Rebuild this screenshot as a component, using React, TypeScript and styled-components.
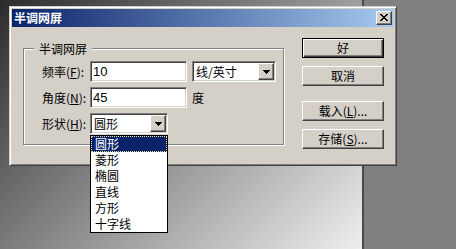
import React from "react";
import styled, { createGlobalStyle } from "styled-components";

const GlobalStyle = createGlobalStyle`
  html, body {
    margin: 0;
    padding: 0;
  }
  body {
    width: 456px;
    height: 249px;
    overflow: hidden;
    font-family: "Noto Sans CJK SC", "Liberation Sans", sans-serif;
    font-size: 12px;
    color: #000;
  }
`;

const face = "#d4d0c8";

const Screen = styled.div`
  position: relative;
  display: flex;
  width: 456px;
  height: 249px;
  overflow: hidden;
`;

const Canvas = styled.div`
  width: 362px;
  height: 100%;
  background: linear-gradient(135deg, #2b2b2b 0%, #efefef 100%);
`;

const CanvasEdge = styled.div`
  width: 2px;
  background: #4a4a4a;
`;

const Workspace = styled.div`
  flex: 1;
  background: #808080;
`;

const Window = styled.div`
  position: absolute;
  left: 9px;
  top: 6px;
  width: 388px;
  height: 160px;
  box-sizing: border-box;
  display: flex;
  flex-direction: column;
  padding: 2px;
  background: ${face};
  border: 1px solid;
  border-color: ${face} #404040 #404040 ${face};
  box-shadow: inset 1px 1px 0 #fff, inset -1px -1px 0 #808080;
`;

const TitleBar = styled.div`
  height: 18px;
  display: flex;
  align-items: center;
  justify-content: space-between;
  padding: 0 2px;
  background: linear-gradient(90deg, #0a246a 0%, #a6caf0 100%);
`;

const Title = styled.span`
  color: #fff;
  font-weight: bold;
  font-size: 12px;
  line-height: 14px;
`;

const raised = `
  border: 1px solid;
  border-color: #fff #404040 #404040 #fff;
  box-shadow: inset -1px -1px 0 #808080, inset 1px 1px 0 ${face};
  background: ${face};
`;

const CloseButton = styled.div`
  width: 16px;
  height: 14px;
  box-sizing: border-box;
  ${raised}
  display: flex;
  align-items: center;
  justify-content: center;
  padding: 0 1px 1px 0;
`;

const Body = styled.div`
  display: flex;
  padding: 11px 10px 0 11px;
`;

const LeftColumn = styled.div`
  width: 262px;
  padding-top: 10px;
`;

const GroupBox = styled.div`
  position: relative;
  width: 261px;
  height: 97px;
  box-sizing: border-box;
  border: 1px solid #808080;
  box-shadow: inset 1px 1px 0 #fff, 1px 1px 0 #fff;
  padding: 12px 0 0 18px;
  display: flex;
  flex-direction: column;
  gap: 5px;
`;

const Legend = styled.span`
  position: absolute;
  top: -7px;
  left: 10px;
  padding: 0 5px;
  background: ${face};
  line-height: 13px;
`;

const Row = styled.div`
  display: flex;
  align-items: center;
  height: 21px;
`;

const Label = styled.span`
  width: 48px;
  line-height: 14px;
  white-space: nowrap;
`;

const Unit = styled.span`
  margin-left: 5px;
  line-height: 14px;
`;

const sunken = `
  border: 1px solid;
  border-color: #808080 #fff #fff #808080;
  box-shadow: inset 1px 1px 0 #404040, inset -1px -1px 0 ${face};
  background: #fff;
`;

const TextField = styled.div<{ $w: number }>`
  width: ${(p) => p.$w}px;
  height: 21px;
  box-sizing: border-box;
  ${sunken}
  padding: 0 0 0 2px;
  display: flex;
  align-items: center;
  font-family: "Liberation Sans", sans-serif;
  font-size: 13px;
`;

const Combo = styled.div<{ $w: number; $gap?: number }>`
  position: relative;
  width: ${(p) => p.$w}px;
  height: 21px;
  margin-left: ${(p) => p.$gap ?? 0}px;
  box-sizing: border-box;
  ${sunken}
  padding: 1px 1px 1px 3px;
  display: flex;
  align-items: center;
  justify-content: space-between;
`;

const ComboText = styled.span`
  line-height: 14px;
`;

const ComboButton = styled.div`
  width: 16px;
  height: 17px;
  box-sizing: border-box;
  ${raised}
  display: flex;
  align-items: center;
  justify-content: center;
`;

const DropList = styled.ul`
  position: absolute;
  left: -1px;
  top: 21px;
  width: 78px;
  margin: 0;
  padding: 0;
  list-style: none;
  box-sizing: border-box;
  border: 1px solid #000;
  background: #fff;
  z-index: 2;
`;

const Option = styled.li<{ $active?: boolean }>`
  height: 16px;
  line-height: 16px;
  padding-left: 4px;
  box-sizing: border-box;
  background: ${(p) => (p.$active ? "#0a246a" : "#fff")};
  color: ${(p) => (p.$active ? "#fff" : "#000")};
  outline: ${(p) => (p.$active ? "1px dotted #e8d890" : "none")};
  outline-offset: -1px;
`;

const ButtonColumn = styled.div`
  margin-left: 17px;
  width: 82px;
  display: flex;
  flex-direction: column;
`;

const Button = styled.div<{ $default?: boolean; $gap?: number }>`
  height: 20px;
  box-sizing: border-box;
  margin-top: ${(p) => p.$gap ?? 0}px;
  display: flex;
  align-items: center;
  justify-content: center;
  line-height: 14px;
  background: ${face};
  ${(p) =>
    p.$default
      ? `
    border: 1px solid #000;
    box-shadow: inset 1px 1px 0 #fff, inset -1px -1px 0 #404040, inset -2px -2px 0 #808080;
  `
      : `
    border: 1px solid;
    border-color: #fff #404040 #404040 #fff;
    box-shadow: inset -1px -1px 0 #808080;
  `}
`;

const CloseGlyph = () => (
  <svg width="8" height="7" viewBox="0 0 8 7" shapeRendering="crispEdges">
    <path
      d="M0 0h2v1h-2zM6 0h2v1h-2zM1 1h2v1h-2zM5 1h2v1h-2zM2 2h4v1h-4zM3 3h2v1h-2zM2 4h4v1h-4zM1 5h2v1h-2zM5 5h2v1h-2zM0 6h2v1h-2zM6 6h2v1h-2z"
      fill="#000"
    />
  </svg>
);

const DownArrow = () => (
  <svg width="7" height="4" viewBox="0 0 7 4" shapeRendering="crispEdges">
    <path d="M0 0h7v1h-7zM1 1h5v1h-5zM2 2h3v1h-3zM3 3h1v1h-1z" fill="#000" />
  </svg>
);

const shapes = ["圆形", "菱形", "椭圆", "直线", "方形", "十字线"];

export default function App() {
  return (
    <>
      <GlobalStyle />
      <Screen>
        <Canvas />
        <CanvasEdge />
        <Workspace />
        <Window>
          <TitleBar>
            <Title>半调网屏</Title>
            <CloseButton>
              <CloseGlyph />
            </CloseButton>
          </TitleBar>
          <Body>
            <LeftColumn>
              <GroupBox>
                <Legend>半调网屏</Legend>
                <Row>
                  <Label>
                    频率(<u>F</u>):
                  </Label>
                  <TextField $w={97}>10</TextField>
                  <Combo $w={84} $gap={5}>
                    <ComboText>线/英寸</ComboText>
                    <ComboButton>
                      <DownArrow />
                    </ComboButton>
                  </Combo>
                </Row>
                <Row>
                  <Label>
                    角度(<u>N</u>):
                  </Label>
                  <TextField $w={97}>45</TextField>
                  <Unit>度</Unit>
                </Row>
                <Row>
                  <Label>
                    形状(<u>H</u>):
                  </Label>
                  <Combo $w={78}>
                    <ComboText>圆形</ComboText>
                    <ComboButton>
                      <DownArrow />
                    </ComboButton>
                    <DropList>
                      {shapes.map((s, i) => (
                        <Option key={s} $active={i === 0}>
                          {s}
                        </Option>
                      ))}
                    </DropList>
                  </Combo>
                </Row>
              </GroupBox>
            </LeftColumn>
            <ButtonColumn>
              <Button $default>好</Button>
              <Button $gap={8}>取消</Button>
              <Button $gap={15}>
                载入(<u>L</u>)...
              </Button>
              <Button $gap={8}>
                存储(<u>S</u>)...
              </Button>
            </ButtonColumn>
          </Body>
        </Window>
      </Screen>
    </>
  );
}
